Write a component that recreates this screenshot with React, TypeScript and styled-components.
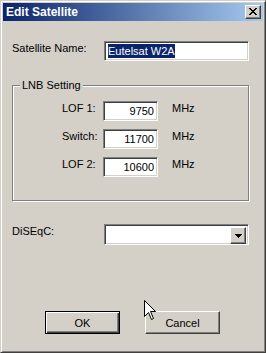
import React from "react";
import styled, { createGlobalStyle, css } from "styled-components";

const GlobalStyle = createGlobalStyle`
  html, body {
    margin: 0;
    padding: 0;
    background: #d4d0c8;
  }
  body {
    font-family: "Liberation Sans", Arial, sans-serif;
    font-size: 11px;
    color: #000;
  }
  * {
    box-sizing: border-box;
  }
`;

const raised = css`
  border: 1px solid;
  border-color: #fff #404040 #404040 #fff;
  box-shadow: inset -1px -1px 0 #808080;
  background: #d4d0c8;
`;

const sunken = css`
  border: 1px solid;
  border-color: #808080 #fff #fff #808080;
  box-shadow: inset 1px 1px 0 #404040, inset -1px -1px 0 #d4d0c8;
  background: #fff;
`;

// 8x7 bitmap of the classic close cross
const closeGlyph = [
  [0, 0, 2], [6, 0, 2],
  [1, 1, 2], [5, 1, 2],
  [2, 2, 4],
  [3, 3, 2],
  [2, 4, 4],
  [1, 5, 2], [5, 5, 2],
  [0, 6, 2], [6, 6, 2],
];

const CloseIcon = () => (
  <svg width="8" height="7" viewBox="0 0 8 7" shapeRendering="crispEdges">
    {closeGlyph.map(([x, y, w], i) => (
      <rect key={i} x={x} y={y} width={w} height={1} fill="#000" />
    ))}
  </svg>
);

const ArrowIcon = () => (
  <svg width="7" height="4" viewBox="0 0 7 4" shapeRendering="crispEdges">
    <rect x="0" y="0" width="7" height="1" fill="#000" />
    <rect x="1" y="1" width="5" height="1" fill="#000" />
    <rect x="2" y="2" width="3" height="1" fill="#000" />
    <rect x="3" y="3" width="1" height="1" fill="#000" />
  </svg>
);

const fields = [
  { label: "LOF 1:", value: "9750" },
  { label: "Switch:", value: "11700" },
  { label: "LOF 2:", value: "10600" },
];

export default function App() {
  return (
    <>
      <GlobalStyle />
      <Window>
        <TitleBar>
          <Title>Edit Satellite</Title>
          <CloseButton>
            <CloseIcon />
          </CloseButton>
        </TitleBar>

        <Body>
          <FieldRow $top={20}>
            <Label $width={92}>Satellite Name:</Label>
            <EditBox $width={145}>
              <Selected>Eutelsat W2A</Selected>
            </EditBox>
          </FieldRow>

          <GroupBox>
            <Legend>LNB Setting</Legend>
            <GroupInner>
              {fields.map((f) => (
                <FieldRow key={f.label} $top={0}>
                  <Label $width={41}>{f.label}</Label>
                  <EditBox $width={55} $right>
                    {f.value}
                  </EditBox>
                  <Unit>MHz</Unit>
                </FieldRow>
              ))}
            </GroupInner>
          </GroupBox>

          <FieldRow $top={23}>
            <Label $width={92}>DiSEqC:</Label>
            <Combo>
              <DropButton>
                <ArrowIcon />
              </DropButton>
            </Combo>
          </FieldRow>

          <ButtonRow>
            <PushButton $default>OK</PushButton>
            <PushButton>Cancel</PushButton>
          </ButtonRow>
        </Body>

        <Cursor width="13" height="21" viewBox="0 0 13 21">
          <path
            d="M0.5 0.5 L0.5 16.5 L4.5 12.5 L7.5 19.5 L9.5 18.5 L6.5 11.5 L11.5 11.5 Z"
            fill="#fff"
            stroke="#000"
            strokeWidth="1"
          />
        </Cursor>
      </Window>
    </>
  );
}

const Window = styled.div`
  position: relative;
  width: 266px;
  height: 353px;
  padding: 2px;
  display: flex;
  flex-direction: column;
  background: #d4d0c8;
  border: 1px solid;
  border-color: #d4d0c8 #404040 #404040 #d4d0c8;
  box-shadow: inset 1px 1px 0 #fff, inset -1px -1px 0 #808080;
`;

const TitleBar = styled.div`
  height: 18px;
  display: flex;
  align-items: center;
  justify-content: space-between;
  padding: 0 2px 0 3px;
  background: linear-gradient(to right, #0a246a, #a6caf0);
`;

const Title = styled.span`
  color: #fff;
  font-weight: bold;
  font-size: 12px;
  line-height: 14px;
`;

const CloseButton = styled.div`
  ${raised};
  width: 16px;
  height: 14px;
  display: flex;
  align-items: center;
  justify-content: center;
  padding: 0 0 1px 0;
`;

const Body = styled.div`
  display: flex;
  flex-direction: column;
  padding: 0 14px 0 9px;
`;

const FieldRow = styled.div<{ $top: number }>`
  display: flex;
  align-items: flex-start;
  margin-top: ${(p) => p.$top}px;
  line-height: 13px;
`;

const Label = styled.div<{ $width: number }>`
  width: ${(p) => p.$width}px;
  padding-top: 1px;
  white-space: nowrap;
`;

const EditBox = styled.div<{ $width: number; $right?: boolean }>`
  ${sunken};
  width: ${(p) => p.$width}px;
  height: 20px;
  padding: 2px 3px 0 3px;
  line-height: 14px;
  text-align: ${(p) => (p.$right ? "right" : "left")};
`;

const Selected = styled.span`
  display: inline-block;
  background: #0a246a;
  color: #fff;
  line-height: 14px;
`;

const Unit = styled.div`
  margin-left: 14px;
  padding-top: 1px;
`;

const GroupBox = styled.div`
  display: flex;
  flex-direction: column;
  margin-top: 24px;
  width: 237px;
  border: 1px solid #808080;
  box-shadow: inset 1px 1px 0 #fff, 1px 1px 0 #fff;
`;

const Legend = styled.div`
  align-self: flex-start;
  margin: -7px 0 0 7px;
  padding: 0 2px;
  line-height: 13px;
  background: #d4d0c8;
`;

const GroupInner = styled.div`
  display: flex;
  flex-direction: column;
  gap: 8px;
  padding: 9px 0 23px 49px;
`;

const Combo = styled.div`
  ${sunken};
  width: 145px;
  height: 21px;
  display: flex;
  justify-content: flex-end;
  padding: 2px;
`;

const DropButton = styled.div`
  ${raised};
  width: 16px;
  height: 17px;
  display: flex;
  align-items: center;
  justify-content: center;
`;

const ButtonRow = styled.div`
  display: flex;
  gap: 25px;
  margin: 66px 0 0 33px;
`;

const PushButton = styled.div<{ $default?: boolean }>`
  width: 75px;
  height: 23px;
  display: flex;
  align-items: center;
  justify-content: center;
  background: #d4d0c8;
  border: 1px solid;
  ${(p) =>
    p.$default
      ? css`
          border-color: #000;
          box-shadow: inset 1px 1px 0 #fff, inset -1px -1px 0 #404040,
            inset -2px -2px 0 #808080;
        `
      : css`
          border-color: #fff #404040 #404040 #fff;
          box-shadow: inset -1px -1px 0 #808080;
        `}
`;

const Cursor = styled.svg`
  position: absolute;
  left: 143px;
  top: 299px;
`;
